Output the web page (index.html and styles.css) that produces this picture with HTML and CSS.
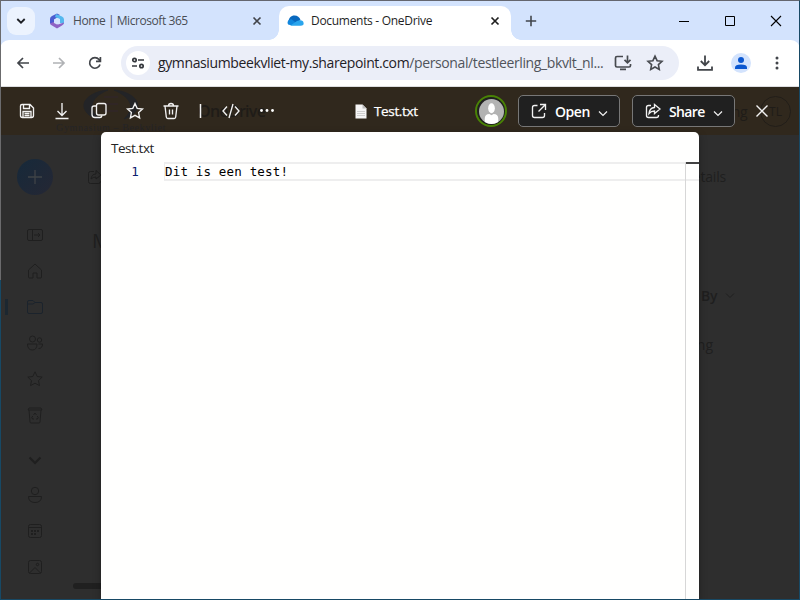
FILE: index.html
```html
<!DOCTYPE html>
<html lang="en">
<head>
<meta charset="utf-8">
<title>Documents - OneDrive</title>
<link rel="stylesheet" href="styles.css">
</head>
<body>
<div class="window">
  <div class="tabstrip">
    <div class="tab-search"><svg width="10" height="10" viewBox="0 0 10 10"><path d="M1.300 3l3.700 3.700L8.700 3" fill="none" stroke="#1d1f24" stroke-width="1.800"/></svg></div>
    <div class="tab">
      <svg width="16" height="16" viewBox="0 0 16 16"><path d="M8 .5L3 3Q1 4 1 6v4.500L5 12V7l6-5z" fill="#4b5bd0"/><path d="M7 1l6 2.500q2 1 2 3V11l-4-1V6L6 4z" fill="#55b8ee"/><path d="M1 10.500l5-2 3 3 6-2q0 2-2 3l-5 3-5-3q-2-1-2-2z" fill="#8f63c4"/><path d="M8 5l3 1.500V10l-3 1.500L5 10V6.500z" fill="#d3e3fd"/></svg>
      <span class="tab-title t-home">Home | Microsoft 365</span>
      <svg class="x" width="10" height="10" viewBox="0 0 10 10"><path d="M1.500 1.500l7 7m0-7l-7 7" stroke="#41444a" stroke-width="1.600"/></svg>
    </div>
    <div class="tab active">
      <svg width="17" height="16" viewBox="0 0 17 16"><path d="M1.500 9C1.500 5 4 2.500 7.500 2.500c3 0 5 1.500 6 4.500L8 11z" fill="#0868be"/><path d="M.5 10q0-3.500 4-3.800L12 12H3Q.5 12 .5 10z" fill="#1086dd"/><path d="M3 12.800l7-4.800q6-2 6.600 2 .4 2.800-3 2.800z" fill="#2aa5ed"/></svg>
      <span class="tab-title t-docs">Documents - OneDrive</span>
      <svg class="x" width="10" height="10" viewBox="0 0 10 10"><path d="M1.500 1.500l7 7m0-7l-7 7" stroke="#1f1f1f" stroke-width="1.700"/></svg>
    </div>
    <svg class="new-tab" width="12" height="12" viewBox="0 0 12 12"><path d="M6 .8v10.400M.8 6h10.400" stroke="#42464c" stroke-width="1.600"/></svg>
    <div class="captions">
      <svg width="46" height="38" viewBox="0 0 46 38"><path d="M18 19.500h10" stroke="#000"/></svg>
      <svg width="46" height="38" viewBox="0 0 46 38"><path d="M18.500 14.500h9v9h-9z" fill="none" stroke="#000"/></svg>
      <svg width="46" height="38" viewBox="0 0 46 38"><path d="M18 14l10 10m0-10L18 24" stroke="#000" stroke-width="1.100"/></svg>
    </div>
  </div>

  <div class="toolbar">
    <div class="nav">
      <svg width="16" height="16" viewBox="0 0 16 16"><path d="M14 8H3m5-5L3 8l5 5" fill="none" stroke="#42454a" stroke-width="1.700"/></svg>
      <svg width="16" height="16" viewBox="0 0 16 16"><path d="M2 8h11M8 3l5 5-5 5" fill="none" stroke="#b0b2b5" stroke-width="1.700"/></svg>
      <svg width="16" height="16" viewBox="0 0 16 16"><path d="M13 9.500A5.300 5.300 0 1 1 12 4.500l1.500 1.800M13.400 2v4.400H9" fill="none" stroke="#42454a" stroke-width="1.700"/></svg>
    </div>
    <div class="omnibox">
      <span class="site"><svg width="14" height="14" viewBox="0 0 14 14" fill="none" stroke="#34373c" stroke-width="1.700"><circle cx="3.500" cy="4" r="1.700"/><path d="M7 4h6M1 10h5"/><circle cx="10.500" cy="10" r="1.700"/></svg></span>
      <span class="url">gymnasiumbeekvliet-my.sharepoint.com<i>/personal/testleerling_bkvlt_nl...</i></span>
      <svg class="install" width="18" height="18" viewBox="0 0 18 18" fill="none" stroke="#474a4f" stroke-width="1.700"><path d="M9 2.500H3Q1.500 2.500 1.500 4v7.500Q1.500 13 3 13h12q1.500 0 1.500-1.500V10M6 15.300h6M13.500 1.500v7M10.500 5.800l3 3 3-3"/></svg>
      <svg class="bookmark" width="18" height="18" viewBox="0 0 18 18"><path d="M9 2.200l2.100 4.500 4.900.6-3.600 3.300.9 4.800L9 13l-4.300 2.400.9-4.800L2 7.300l4.900-.6z" fill="none" stroke="#474a4f" stroke-width="1.600"/></svg>
    </div>
    <svg class="dl" width="18" height="18" viewBox="0 0 18 18" fill="none" stroke="#42454a" stroke-width="1.800"><path d="M9 1.500v9.500M4.800 7L9 11.200 13.200 7M2 12.500v3.300h14v-3.300"/></svg>
    <span class="profile"><svg width="12" height="12" viewBox="0 0 12 12" fill="#0b57d0"><circle cx="6" cy="3" r="3"/><path d="M0 12v-1.500Q0 7.500 6 7.500t6 3V12z"/></svg></span>
    <svg class="kebab" width="4" height="16" viewBox="0 0 4 16" fill="#42454a"><circle cx="2" cy="3" r="1.500"/><circle cx="2" cy="8" r="1.500"/><circle cx="2" cy="13" r="1.500"/></svg>
  </div>

  <div class="page">
    <div class="suite">
      <div class="school">
        <svg width="60" height="34" viewBox="0 0 60 34" fill="none" stroke="#232427"><path d="M27 2C6 4-6 18 11 29l8 2C4 19 12 8 27 2zM33 2c20 2 32 15 17 26l-7 3C57 18 47 8 33 2z" fill="#232427"/><path d="M23 9h14M23 16h14M23 23h14" stroke="#302625" stroke-width="2"/></svg>
        <span>Gymnasium – Beekvliet</span>
      </div>
      <span class="brand">OneDrive</span>
      <span class="user">ng</span>
      <span class="initials">TL</span>
    </div>
    <div class="content">
      <div class="rail">
        <span class="add"><svg width="16" height="16" viewBox="0 0 16 16"><path d="M8 1v14M1 8h14" stroke="#3f4347" stroke-width="1.300"/></svg></span>
        <svg viewBox="0 0 18 18"><rect x="1.500" y="3.500" width="15" height="11" rx="1.500"/><path d="M6.500 4v10M8 9h6M12 7l2 2-2 2"/></svg>
        <svg viewBox="0 0 18 18"><path d="M2.500 8L9 2l6.500 6v7q0 1-1 1H11v-5H7v5H3.500q-1 0-1-1z"/></svg>
        <svg class="selected" viewBox="0 0 18 18"><path d="M1.500 4q0-1.500 1.500-1.500h4L9 4.500h6q1.500 0 1.500 1.500v8q0 1.500-1.500 1.500H3Q1.500 15.500 1.500 14zM2 6h5l2-1.500"/></svg>
        <svg viewBox="0 0 18 18"><circle cx="6.500" cy="5" r="3"/><circle cx="13.500" cy="6" r="2.200"/><path d="M1.500 10H11q0 6-4.700 6T1.500 10zM12.500 10h4q0 4.500-4 4.500"/></svg>
        <svg viewBox="0 0 18 18"><path d="M9 1.800l2.200 4.700 5 .6-3.700 3.500 1 5L9 13.200l-4.500 2.400 1-5L1.800 7.100l5-.6z"/></svg>
        <svg viewBox="0 0 18 18"><path d="M2 4l1-2h12l1 2zM3 4l1 12q0 1 1 1h8q1 0 1-1l1-12"/><path d="M8 13H6.500l-.7-1.500 1-1.500M7.500 9L9 7l1.500 2M11.200 10l1 1.500-.7 1.500H10"/></svg>
        <svg class="chev" viewBox="0 0 18 18"><path d="M3.500 6.500L9 12l5.500-5.500" stroke-width="2"/></svg>
        <svg viewBox="0 0 18 18"><circle cx="9" cy="5" r="3.700"/><path d="M2.500 10.500h13q0 6-6.500 6t-6.500-6z"/></svg>
        <svg viewBox="0 0 18 18"><rect x="2.500" y="2.500" width="13" height="13" rx="2"/><path d="M3 5.500h12"/><path d="M5 9h8M5 12h5" stroke-width="2" stroke-dasharray="2 1"/></svg>
        <svg viewBox="0 0 18 18"><rect x="2.500" y="2.500" width="13" height="13" rx="2"/><circle cx="11.500" cy="6.500" r="1.200"/><path d="M3.500 15L9 9.500l5.500 5.500"/></svg>
      </div>
      <div class="main">
        <div class="commands">
          <svg width="16" height="16" viewBox="0 0 16 16" fill="none" stroke="#1f1f1f"><path d="M7 2.500H3.500q-2 0-2 2v8q0 2 2 2h8q2 0 2-2V12M9 1.500l5 4.500-5 4V8q-3 0-5 2 .5-5 5-5z"/></svg>
          <span>Details</span>
        </div>
        <div class="heading">My files</div>
        <div class="cols"><span>Modified By</span><svg width="10" height="10" viewBox="0 0 10 10"><path d="M1 3.500l4 4 4-4" fill="none" stroke="#1f1f1f"/></svg></div>
        <div class="row">Testleerling</div>
        <div class="scroll"></div>
      </div>
    </div>

    <div class="viewer">
      <div class="actions">
        <div class="tools">
          <svg viewBox="0 0 18 18"><path d="M4 2.500h8L15.500 6v7.500q0 2-2 2h-9q-2 0-2-2V4q0-1.500 1.500-1.500zM5.500 3v3.500h6V3M5 15v-5.500h8V15M6.500 11.500h5M6.500 13.500h5"/></svg>
          <svg class="down" viewBox="0 0 18 18"><path d="M9 1v12M4.500 9L9 13.500 13.500 9M2.500 16.500h13"/></svg>
          <svg viewBox="0 0 18 18"><rect x="6.500" y="1.500" width="9.500" height="11.500" rx="2"/><path d="M6.500 4H4Q2 4 2 6v6.500q0 3 3 3h5q1.500 0 2-2"/></svg>
          <svg viewBox="0 0 18 18"><path d="M9 1.500l2.200 4.900 5.300.6-3.900 3.600 1 5.300L9 13.300l-4.600 2.600 1-5.300L1.500 7l5.300-.6z"/></svg>
          <svg viewBox="0 0 18 18"><path d="M1.500 4h15M6.500 4q0-2.500 2.500-2.500T11.500 4M3 4l1.300 11q.2 1.500 1.500 1.500h6.400q1.300 0 1.500-1.500L15 4M7.500 7.500v5M10.500 7.500v5"/></svg>
          <svg class="bar" viewBox="0 0 18 18"><path d="M8.500 2v14" stroke-width="1.500"/></svg>
          <svg viewBox="0 0 18 18"><path d="M5 4.500L1 9l4 4.500M13 4.500L17 9l-4 4.500M11 2L7 16"/></svg>
          <svg viewBox="0 0 18 18"><g fill="#fff" stroke="none"><circle cx="3.500" cy="8.500" r="1.400"/><circle cx="9" cy="8.500" r="1.400"/><circle cx="14.500" cy="8.500" r="1.400"/></g></svg>
        </div>
        <div class="filename">
          <svg width="12" height="15" viewBox="0 0 12 15"><path d="M.5.500h7l4 4v10H.5z" fill="#f5f5f5"/><path d="M7.500.500v4h4z" fill="#bbb"/><path d="M2 7.500h8M2 9.500h8M2 11.500h8" stroke="#cfcfcf"/></svg>
          <span>Test.txt</span>
        </div>
        <div class="avatar"><svg width="25" height="25" viewBox="0 0 24 24"><circle cx="12" cy="12" r="12" fill="#b3b3b3"/><ellipse cx="12" cy="8.800" rx="3.200" ry="4.800" fill="#fff"/><path d="M5.500 22v-3q0-4.500 4.500-4.500l2 1 2-1q4.500 0 4.500 4.500v3q-6.500 3.800-13 0z" fill="#fff"/></svg></div>
        <div class="button open">
          <svg width="16" height="16" viewBox="0 0 16 16"><path d="M6.500 2.500h-3q-2 0-2 2v8q0 2 2 2h8q2 0 2-2V10M9 1.500h5.500V7M14 2L7.500 8.500"/></svg>
          <span>Open</span>
          <svg class="caret" width="10" height="10" viewBox="0 0 10 10"><path d="M1 3.500l4 4 4-4"/></svg>
        </div>
        <div class="button share">
          <svg width="16" height="16" viewBox="0 0 16 16"><path d="M6 2.500H3.500q-2 0-2 2v8q0 2 2 2h8q2 0 2-2V12M9.500 1.500L15 6l-5.500 4.500V8Q6 8 4 10.500 4.500 5 9.500 4.500z"/></svg>
          <span>Share</span>
          <svg class="caret" width="10" height="10" viewBox="0 0 10 10"><path d="M1 3.500l4 4 4-4"/></svg>
        </div>
        <svg class="close" width="14" height="14" viewBox="0 0 14 14"><path d="M1.500 1.500l11 11m0-11l-11 11" stroke="#f2f2f2" stroke-width="1.400"/></svg>
      </div>
      <div class="sheet">
        <div class="sheet-name">Test.txt</div>
        <div class="editor">
          <div class="line-no">1</div>
          <div class="line">Dit is een test!</div>
          <div class="ruler"></div>
        </div>
      </div>
    </div>
  </div>
</div>
</body>
</html>
```
FILE: styles.css
```css
* { box-sizing: border-box; }
body { margin: 0; font-family: "Open Sans", "Noto Sans", sans-serif; }
svg { display: block; flex: none; }
span { white-space: nowrap; }

.window { position: relative; width: 800px; height: 600px; overflow: hidden; background: #d3e3fd; display: flex; flex-direction: column; }
.window::before, .window::after { content: ""; position: absolute; z-index: 5; pointer-events: none; }
.window::before { inset: 0; border: 1px solid #174965; border-top-color: #64666f; }
.window::after { left: 0; top: 0; width: 1px; height: 280px; background: #6b6b6d; }

.tabstrip { flex: none; height: 40px; padding: 1px 1px 0; display: flex; align-items: center; }
.tab-search { width: 28px; height: 28px; margin-left: 6px; border-radius: 9px; background: #ecf3fe; display: grid; place-items: center; }
.tab { width: 244px; height: 34px; margin-top: 5px; padding: 0 17px 5px 14px; display: flex; align-items: center; }
.tab .x { margin-left: auto; }
.tab-title { font-size: 12px; line-height: 18px; margin-left: 8px; color: #494d54; }
.t-home { letter-spacing: -.43px; }
.t-docs { letter-spacing: -.3px; color: #1f1f1f; margin-left: 7px; }
.active { position: relative; width: 232px; padding: 0 11px 5px 8px; background: #fff; border-radius: 10px 10px 0 0; }
.active::before, .active::after { content: ""; position: absolute; bottom: 0; width: 10px; height: 10px; }
.active::before { left: -10px; background: radial-gradient(circle at 0 0, transparent 9.500px, #fff 10px); }
.active::after { right: -10px; background: radial-gradient(circle at 100% 0, transparent 9.500px, #fff 10px); }
.new-tab { margin-left: 14px; }
.captions { display: flex; margin-left: auto; }

.toolbar { flex: none; height: 47px; background: #fff; border-radius: 9px 9px 0 0; border-bottom: 1px solid #dcdde0; display: flex; align-items: center; padding: 0 21px 0 15px; }
.nav { display: flex; gap: 20px; }
.omnibox { width: 558px; height: 34px; margin-left: 18px; padding: 0 15px 0 5px; border-radius: 17px; background: #ebeef8; display: flex; align-items: center; }
.site { width: 24px; height: 24px; border-radius: 50%; background: #fff; display: grid; place-items: center; }
.url { width: 456px; margin-left: 8px; font-size: 14px; letter-spacing: -.38px; line-height: 20px; color: #1f2126; }
.url i { font-style: normal; color: #50545b; }
.bookmark { margin-left: 14px; }
.dl { margin-left: 17px; }
.profile { width: 20px; height: 20px; margin-left: 17px; border-radius: 50%; background: #d3e3fd; display: grid; place-items: center; }
.kebab { margin-left: auto; }

.page { position: relative; flex: 1; display: flex; flex-direction: column; color: #1f1f1f; }
.suite { height: 48px; background: #30281d; display: flex; align-items: center; padding: 0 9px 0 57px; }
.school { width: 108px; display: flex; flex-direction: column; align-items: center; color: #242427; }
.school span { font: 10px/12px "Liberation Serif", serif; letter-spacing: .6px; }
.brand { margin-left: 33px; font-size: 16px; font-weight: 600; letter-spacing: -.7px; color: #1f1c18; }
.user { margin-left: auto; font-size: 14px; letter-spacing: -.5px; color: #1f1c18; }
.initials { width: 31px; height: 31px; margin-left: 13px; border: 1px solid #221e19; border-radius: 50%; display: grid; place-items: center; font-size: 12px; color: #1f1c18; }

.content { flex: 1; display: flex; background: #2e2e2e; }
.rail { width: 70px; padding-top: 24px; display: flex; flex-direction: column; align-items: center; gap: 18px; background: linear-gradient(#1c2730, #1c2730) 5px 164px / 3px 16px no-repeat; }
.rail > svg { width: 18px; height: 18px; fill: none; stroke: #1f1f1f; }
.add { width: 36px; height: 36px; margin-bottom: 13px; border-radius: 50%; background: linear-gradient(135deg, #16293a, #252734); display: grid; place-items: center; }
.rail .selected { stroke: #1b232c; }
.rail .chev { margin: 9px 0 -1px; }
.main { flex: 1; display: flex; flex-direction: column; padding: 33px 0 0 17px; font-size: 14px; }
.commands { display: flex; justify-content: space-between; align-items: center; height: 18px; padding-right: 74px; letter-spacing: -.2px; line-height: 16px; }
.heading { margin: 41px 0 0 5px; font-size: 20px; line-height: 28px; }
.cols { display: flex; justify-content: flex-end; align-items: center; gap: 8px; margin-top: 30px; padding-right: 65px; height: 20px; font-weight: 600; letter-spacing: -.4px; }
.row { margin-top: 30px; padding-right: 87px; text-align: right; line-height: 20px; }
.scroll { width: 90px; height: 6px; margin: 228px 0 0 -14px; border-radius: 3px; background: #202020; }

.viewer { position: absolute; inset: 0; display: flex; flex-direction: column; align-items: center; }
.actions { flex: none; width: 100%; height: 45px; padding: 3px 31px 0 9px; display: flex; align-items: center; color: #fff; }
.tools { display: flex; width: 276px; }
.tools svg { width: 36px; height: 18px; fill: none; stroke: #f2f2f2; stroke-width: 1.350; }
.tools .down { margin: 0 1px 0 -1px; }
.tools .bar { width: 24px; }
.filename { display: flex; align-items: center; margin-left: 70px; gap: 7px; width: 120px; font-size: 13.500px; letter-spacing: -.35px; -webkit-text-stroke: .25px #fff; }
.avatar { width: 32px; height: 32px; flex: none; border: 2px solid #498205; border-radius: 50%; background: #202020; display: grid; place-items: center; }
.button { width: 102px; height: 32px; margin-left: 11px; padding: 0 11px 0 12px; border: 1px solid #777; border-radius: 5px; background: #202020; display: flex; align-items: center; font-size: 14px; font-weight: 600; letter-spacing: -.45px; }
.button span { margin-left: 8px; }
.button svg { fill: none; stroke: #f2f2f2; stroke-width: 1.350; }
.button .caret { margin: 3px 0 0 auto; stroke-width: 1.200; }
.share { width: 103px; margin-left: 12px; }
.share span { letter-spacing: -.65px; }
.close { margin-left: auto; }
.sheet { width: 598px; flex: 1; background: #fffffe; border-radius: 5px 5px 0 0; box-shadow: 0 3px 9px rgba(0, 0, 0, .3); display: flex; flex-direction: column; }
.sheet-name { height: 30px; padding: 7px 0 0 10px; font-size: 13.500px; line-height: 19px; letter-spacing: -.45px; color: #242424; }
.editor { flex: 1; display: grid; grid-template-columns: 64px 1fr 14px; font: 12.500px/15px "DejaVu Sans Mono", monospace; letter-spacing: .17px; color: #000; }
.line-no { padding: 2px 26px 0 0; text-align: right; color: #0b216f; }
.line { height: 19px; border: 2px solid #eee; border-left-width: 1px; border-right: 0; margin-left: -1px; }
.ruler { border-left: 1px solid #d7d7d7; background: linear-gradient(#424242, #424242) 0 0 / 100% 2px no-repeat, linear-gradient(#eee, #eee) 0 17px / 100% 2px no-repeat; }
```
